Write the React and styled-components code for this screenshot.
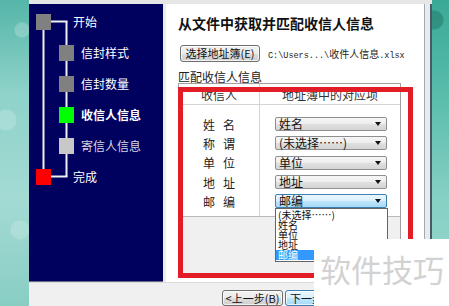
import React from 'react';
import styled, { createGlobalStyle } from 'styled-components';

const Global = createGlobalStyle`
  html, body { margin: 0; padding: 0; }
  body {
    width: 449px; height: 306px; overflow: hidden;
    font-family: "Noto Sans CJK SC", "Liberation Sans", sans-serif;
    background: #f0f0f0;
  }
  * { box-sizing: border-box; }
`;

const Screen = styled.div`
  position: relative;
  width: 449px;
  height: 306px;
  display: grid;
  grid-template-columns: 29px 403px 17px;
  overflow: hidden;
`;

const Desktop = styled.div`
  background: ${p => p.$side === 'left'
    ? `radial-gradient(circle at 22px 30px, rgba(255,255,255,0.22) 0 7px, transparent 8px),
       radial-gradient(circle at 6px 120px, rgba(255,255,255,0.18) 0 10px, transparent 11px),
       radial-gradient(circle at 20px 230px, rgba(255,255,255,0.18) 0 9px, transparent 10px),
       linear-gradient(180deg, #55b5a9 0%, #8ed2c9 30%, #a3dbd3 65%, #88cdc4 100%)`
    : `radial-gradient(circle at 2px 20px, rgba(0,60,50,0.25) 0 9px, transparent 10px),
       linear-gradient(180deg, #3aa996 0%, #58bcab 30%, #86d0c4 65%, #9ad8cf 100%)`};
`;

const Window = styled.div`
  display: flex;
  flex-direction: column;
  background: #f0f0f0;
`;

const TopEdge = styled.div`
  height: 4px;
  background: #e6e6e6;
`;

const Body = styled.div`
  display: flex;
  height: 278px;
`;

const Nav = styled.nav`
  position: relative;
  width: 134px;
  background: #00005f;
  padding-top: 2px;
  border-bottom: 1px solid #6a6a8a;
`;

const NavLines = styled.svg`
  position: absolute;
  left: 0;
  top: 0;
`;

const StepRow = styled.div`
  position: relative;
  height: 31px;
  display: flex;
  align-items: center;
  padding-left: ${p => (p.$level === 0 ? 7 : 30)}px;
`;

const StepBox = styled.span`
  width: 15px;
  height: 16px;
  flex: none;
  background: ${p => p.$color};
  margin-right: ${p => (p.$level === 0 ? 22 : 7)}px;
`;

const StepLabel = styled.span`
  font-size: 12px;
  line-height: 14px;
  color: ${p => (p.$muted ? '#d4d4e4' : '#ffffff')};
  font-weight: ${p => (p.$current ? 700 : 400)};
  white-space: nowrap;
`;

const Gap = styled.div`
  width: 3px;
  background: #ececec;
`;

const Content = styled.section`
  position: relative;
  width: 259px;
  background: #ffffff;
  border-right: 1px solid #a8a8a8;
  padding: 10px 0 0 12px;
  display: flex;
  flex-direction: column;
`;

const Frame = styled.div`
  flex: 1;
  background: #e4ecf2;
  border-right: 2px solid #4a5a66;
`;

const Title = styled.h1`
  margin: 0;
  font-size: 14px;
  line-height: 18px;
  font-weight: 700;
  color: #111;
  white-space: nowrap;
`;

const PickRow = styled.div`
  margin-top: 13px;
  display: flex;
  align-items: center;
  gap: 8px;
  padding-left: 2px;
`;

const WinButton = styled.div`
  width: ${p => p.$w}px;
  height: ${p => p.$h || 17}px;
  flex: none;
  border: 1px solid ${p => (p.$default ? '#3c7fb1' : '#707070')};
  border-radius: 3px;
  background: ${p => p.$default
    ? 'linear-gradient(180deg, #eaf6fd 0%, #d9f0fc 50%, #bee6fd 51%, #a7d9f5 100%)'
    : 'linear-gradient(180deg, #f2f2f2 0%, #ebebeb 50%, #dddddd 51%, #cfcfcf 100%)'};
  box-shadow: inset 0 0 0 1px rgba(255,255,255,0.7);
  display: flex;
  align-items: center;
  justify-content: ${p => (p.$start ? 'flex-start' : 'center')};
  padding-left: ${p => (p.$start ? 4 : 0)}px;
  font-size: 11px;
  line-height: 13px;
  color: #111;
  white-space: nowrap;
  overflow: hidden;
`;

const PathText = styled.span`
  font-family: "Liberation Mono", "Noto Sans CJK SC", monospace;
  font-size: 8.5px;
  color: #222;
  white-space: nowrap;
`;

const PathCjk = styled.span`
  font-family: "Noto Sans CJK SC", sans-serif;
  font-size: 10px;
`;

const SectionLabel = styled.div`
  margin-top: 8px;
  font-size: 12px;
  line-height: 13px;
  color: #222;
`;

const Table = styled.div`
  width: 223px;
  height: 194px;
  border: 1px solid #a0a0a0;
  background: #f0f0f0;
  display: flex;
  flex-direction: column;
`;

const HeaderRow = styled.div`
  display: grid;
  grid-template-columns: 81px 1fr;
  height: 21px;
  background: #fff;
  border-bottom: 1px solid #d5d5d5;
`;

const HeaderCell = styled.div`
  display: flex;
  align-items: center;
  justify-content: center;
  font-size: 12px;
  color: #333;
  border-right: ${p => (p.$first ? '1px solid #d5d5d5' : 'none')};
`;

const Rows = styled.div`
  display: grid;
  grid-template-columns: 81px 1fr;
  background: #fff;
  border-bottom: 1px solid #b8b8b8;
`;

const Column = styled.div`
  display: flex;
  flex-direction: column;
  padding: 9.5px 0 5.5px;
  border-right: ${p => (p.$first ? '1px solid #d5d5d5' : 'none')};
`;

const LabelCell = styled.div`
  height: 19.3px;
  display: flex;
  align-items: center;
  justify-content: center;
  padding-left: 8px;
  letter-spacing: 8px;
  font-size: 12px;
  color: #222;
`;

const FieldCell = styled.div`
  height: 19.3px;
  display: flex;
  align-items: center;
  padding-left: 15px;
`;

const Select = styled.div`
  width: 112px;
  height: 14px;
  border: 1px solid ${p => (p.$open ? '#3c7fb1' : '#8e8f8f')};
  border-radius: 2px;
  background: ${p => p.$open
    ? 'linear-gradient(180deg, #eaf6fd 0%, #d9f0fc 50%, #bee6fd 51%, #a7d9f5 100%)'
    : 'linear-gradient(180deg, #f6f6f6 0%, #ededed 50%, #e0e0e0 51%, #d4d4d4 100%)'};
  display: flex;
  align-items: center;
  justify-content: space-between;
  padding: 0 5px 0 3px;
  font-size: 12px;
  line-height: 12px;
  color: #111;
  white-space: nowrap;
`;

const Arrow = styled.span`
  width: 0;
  height: 0;
  border-left: 3.5px solid transparent;
  border-right: 3.5px solid transparent;
  border-top: 4px solid #111;
`;

const DropList = styled.ul`
  position: absolute;
  left: 109px;
  top: 204px;
  width: 113px;
  height: 54px;
  margin: 0;
  padding: 1px 0 0;
  list-style: none;
  background: #fff;
  border: 1px solid #646464;
`;

const DropItem = styled.li`
  height: 10px;
  line-height: 10px;
  font-size: 10px;
  padding-left: 2px;
  color: ${p => (p.$active ? '#fff' : '#111')};
  background: ${p => (p.$active ? '#3399ff' : 'transparent')};
  white-space: nowrap;
`;

const RedMark = styled.div`
  position: absolute;
  left: 12px;
  top: 83px;
  width: 235px;
  height: 191px;
  border: 5px solid #e31d25;
  pointer-events: none;
`;

const Footer = styled.div`
  height: 24px;
  border-top: 1px solid #dadada;
  display: flex;
  gap: 2px;
  padding: 7px 0 0 193px;
`;

const Watermark = styled.div`
  position: absolute;
  left: 314px;
  top: 239px;
  right: 0;
  bottom: 0;
  background: #fff;
  padding: 14px 0 0 6px;
  font-size: 31px;
  line-height: 31px;
  color: #d2d2d2;
  white-space: nowrap;
`;

const steps = [
  { label: '开始', level: 0, color: '#808080' },
  { label: '信封样式', level: 1, color: '#808080' },
  { label: '信封数量', level: 1, color: '#808080' },
  { label: '收信人信息', level: 1, color: '#00ff00', current: true },
  { label: '寄信人信息', level: 1, color: '#c8c8c8', muted: true },
  { label: '完成', level: 0, color: '#ff0000' },
];

const fields = [
  { label: '姓名', value: '姓名' },
  { label: '称谓', value: '(未选择……)' },
  { label: '单位', value: '单位' },
  { label: '地址', value: '地址' },
  { label: '邮编', value: '邮编', open: true },
];

const options = ['(未选择……)', '姓名', '单位', '地址', '邮编'];

export default function App() {
  return (
    <>
      <Global />
      <Screen>
        <Desktop $side="left" />
        <Window>
          <TopEdge />
          <Body>
            <Nav>
              <NavLines width="134" height="278" viewBox="0 0 134 278">
                <g stroke="#f0f0f0" strokeWidth="2" fill="none">
                  <line x1="14.5" y1="17.5" x2="14.5" y2="172.5" />
                  <line x1="37.5" y1="17.5" x2="37.5" y2="172.5" />
                  <line x1="14.5" y1="17.5" x2="38.5" y2="17.5" />
                  <line x1="14.5" y1="172.5" x2="38.5" y2="172.5" />
                </g>
              </NavLines>
              {steps.map(s => (
                <StepRow key={s.label} $level={s.level}>
                  <StepBox $color={s.color} $level={s.level} />
                  <StepLabel $current={s.current} $muted={s.muted}>{s.label}</StepLabel>
                </StepRow>
              ))}
            </Nav>
            <Gap />
            <Content>
              <Title>从文件中获取并匹配收信人信息</Title>
              <PickRow>
                <WinButton $w={80}>选择地址簿(E)</WinButton>
                <PathText>C:\Users...\<PathCjk>收件人信息</PathCjk>.xlsx</PathText>
              </PickRow>
              <SectionLabel>匹配收信人信息</SectionLabel>
              <Table>
                <HeaderRow>
                  <HeaderCell $first>收信人</HeaderCell>
                  <HeaderCell>地址簿中的对应项</HeaderCell>
                </HeaderRow>
                <Rows>
                  <Column $first>
                    {fields.map(f => (
                      <LabelCell key={f.label}>{f.label}</LabelCell>
                    ))}
                  </Column>
                  <Column>
                    {fields.map(f => (
                      <FieldCell key={f.label}>
                        <Select $open={f.open}>
                          <span>{f.value}</span>
                          <Arrow />
                        </Select>
                      </FieldCell>
                    ))}
                  </Column>
                </Rows>
              </Table>
              <RedMark />
              <DropList>
                {options.map(o => (
                  <DropItem key={o} $active={o === '邮编'}>{o}</DropItem>
                ))}
              </DropList>
            </Content>
            <Frame />
          </Body>
          <Footer>
            <WinButton $w={61} $h={16}>&lt;上一步(B)</WinButton>
            <WinButton $w={70} $h={16} $default $start>下一步(N)&gt;</WinButton>
          </Footer>
        </Window>
        <Desktop $side="right" />
        <Watermark>软件技巧</Watermark>
      </Screen>
    </>
  );
}
